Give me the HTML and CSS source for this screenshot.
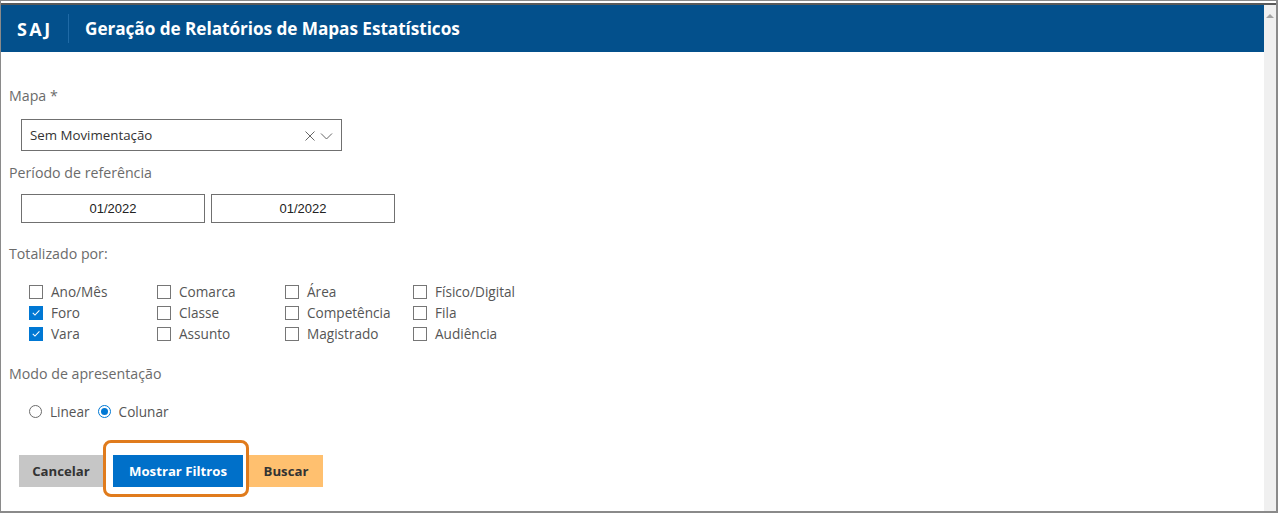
FILE: index.html
```html
<!DOCTYPE html>
<html lang="pt">
<head>
<meta charset="utf-8">
<link rel="stylesheet" href="styles.css">
</head>
<body>
<div class="frame">
  <div class="topline"></div>
  <div class="shell">
    <div class="main">
      <header class="header">
        <span class="brand">SAJ</span>
        <span class="divider"></span>
        <h1 class="title">Geração de Relatórios de Mapas Estatísticos</h1>
      </header>
      <div class="content">
        <div class="label label-mapa">Mapa *</div>
        <div class="select">
          <span class="select-text">Sem Movimentação</span>
          <svg class="sel-icon" width="30" height="12" viewBox="0 0 30 12">
            <path d="M1.5 1.5 L10.5 10.5 M10.5 1.5 L1.5 10.5" stroke="#666" stroke-width="1" fill="none"/>
            <path d="M17 3.5 L22.5 9 L28 3.5" stroke="#666" stroke-width="1" fill="none"/>
          </svg>
        </div>
        <div class="label label-periodo">Período de referência</div>
        <div class="dates">
          <div class="date">01/2022</div>
          <div class="date">01/2022</div>
        </div>
        <div class="label label-total">Totalizado por:</div>
        <div class="checks">
          <label class="check"><span class="box"></span>Ano/Mês</label>
          <label class="check"><span class="box"></span>Comarca</label>
          <label class="check"><span class="box"></span>Área</label>
          <label class="check"><span class="box"></span>Físico/Digital</label>
          <label class="check"><span class="box on"><svg width="13" height="13" viewBox="0 0 13 13"><path d="M3 6.8 L5.4 9.2 L10.2 4.2" stroke="#fff" stroke-width="1.1" fill="none"/></svg></span>Foro</label>
          <label class="check"><span class="box"></span>Classe</label>
          <label class="check"><span class="box"></span>Competência</label>
          <label class="check"><span class="box"></span>Fila</label>
          <label class="check"><span class="box on"><svg width="13" height="13" viewBox="0 0 13 13"><path d="M3 6.8 L5.4 9.2 L10.2 4.2" stroke="#fff" stroke-width="1.1" fill="none"/></svg></span>Vara</label>
          <label class="check"><span class="box"></span>Assunto</label>
          <label class="check"><span class="box"></span>Magistrado</label>
          <label class="check"><span class="box"></span>Audiência</label>
        </div>
        <div class="label label-modo">Modo de apresentação</div>
        <div class="radios">
          <label class="radio"><span class="circle"></span>Linear</label>
          <label class="radio"><span class="circle on"><span class="dot"></span></span>Colunar</label>
        </div>
        <div class="buttons">
          <button class="btn btn-cancel">Cancelar</button>
          <button class="btn btn-show">Mostrar Filtros</button>
          <button class="btn btn-search">Buscar</button>
          <span class="highlight"></span>
        </div>
      </div>
    </div>
    <div class="scrollbar">
      <svg width="12" height="8" viewBox="0 0 12 8" class="arrow"><path d="M2 7 L6 3 L10 7 Z" fill="#a3a3a3"/></svg>
    </div>
  </div>
</div>
</body>
</html>
```
FILE: styles.css
```css
* { box-sizing: border-box; }
html, body { margin: 0; padding: 0; background: #fff; }
body {
  width: 1278px;
  height: 513px;
  overflow: hidden;
  font-family: "Open Sans", "Noto Sans", sans-serif;
}
.frame {
  width: 1278px;
  height: 513px;
  border: 1px solid #8a8a8a;
  border-right-width: 2px;
  border-bottom-width: 2px;
  padding-top: 2px;
  display: flex;
  flex-direction: column;
}
.topline { height: 2px; background: #5a5a5a; }
.shell { flex: 1; display: flex; min-height: 0; }
.main { flex: 1; display: flex; flex-direction: column; }
.scrollbar {
  width: 12px;
  background: #f0f0f0;
  display: flex;
  justify-content: center;
  padding-top: 6px;
}
.arrow { display: block; }
.header {
  height: 47px;
  background: #03508c;
  display: flex;
  align-items: center;
  padding-left: 16px;
  color: #fff;
}
.brand {
  flex: none;
  width: 51px;
  font-weight: 700;
  font-size: 18px;
  letter-spacing: 2.4px;
}
.divider {
  width: 1px;
  height: 29px;
  background: #1f6aa6;
  margin-right: 16px;
}
.title { margin: 0; font-size: 17.2px; font-weight: 700; letter-spacing: -0.05px; }
.content { padding-left: 8px; position: relative; }
.label { color: #6b6b6b; font-size: 14.2px; line-height: 20px; }
.label-mapa { margin-top: 34px; }
.select {
  margin: 13px 0 0 12px;
  width: 321px;
  height: 32px;
  border: 1px solid #707070;
  display: flex;
  align-items: center;
  padding-left: 8px;
  padding-right: 7px;
  justify-content: space-between;
}
.select-text { color: #333; font-size: 13.3px; }
.sel-icon { display: block; margin-top: 1px; }
.label-periodo { margin-top: 12px; }
.dates { display: flex; gap: 6px; margin: 11px 0 0 12px; }
.date {
  width: 184px;
  height: 29px;
  border: 1px solid #707070;
  text-align: center;
  font-family: "Liberation Sans", Arial, sans-serif;
  font-size: 13px;
  line-height: 28px;
  color: #222;
}
.label-total { margin-top: 21px; }
.checks {
  display: grid;
  grid-template-columns: repeat(4, 128px);
  grid-auto-rows: 21px;
  margin: 17px 0 0 20px;
}
.check {
  display: flex;
  align-items: center;
  gap: 8px;
  font-size: 13.6px;
  color: #555;
}
.box {
  width: 14px;
  height: 14px;
  border: 1px solid #767676;
  display: inline-flex;
  align-items: center;
  justify-content: center;
  flex: none;
}
.box.on { background: #0078d4; border-color: #0078d4; }
.box svg { display: block; }
.label-modo { margin-top: 20px; }
.radios { display: flex; gap: 8px; margin: 17px 0 0 20px; height: 20px; align-items: center; }
.radio { display: flex; align-items: center; gap: 8px; font-size: 13.6px; color: #555; }
.circle {
  width: 13px;
  height: 13px;
  border: 1px solid #6b6b6b;
  border-radius: 50%;
  display: inline-flex;
  align-items: center;
  justify-content: center;
}
.circle.on { border-color: #0078d4; }
.dot { width: 7px; height: 7px; border-radius: 50%; background: #0078d4; }
.buttons {
  position: relative;
  display: flex;
  margin: 34px 0 0 10px;
  height: 32px;
}
.btn {
  border: 0;
  height: 32px;
  font-family: "Open Sans", "Noto Sans", sans-serif;
  font-weight: 700;
  font-size: 13.2px;
  padding: 0;
  color: #333;
}
.btn-cancel { width: 84px; background: #c6c6c6; }
.btn-show { width: 130px; margin-left: 10px; background: #0070c9; color: #fff; }
.btn-search { width: 74px; margin-left: 6px; background: #ffc06f; }
.highlight {
  position: absolute;
  left: 84px;
  top: -15px;
  width: 146px;
  height: 57px;
  border: 3px solid #e07b1c;
  border-radius: 8px;
  pointer-events: none;
}
```
